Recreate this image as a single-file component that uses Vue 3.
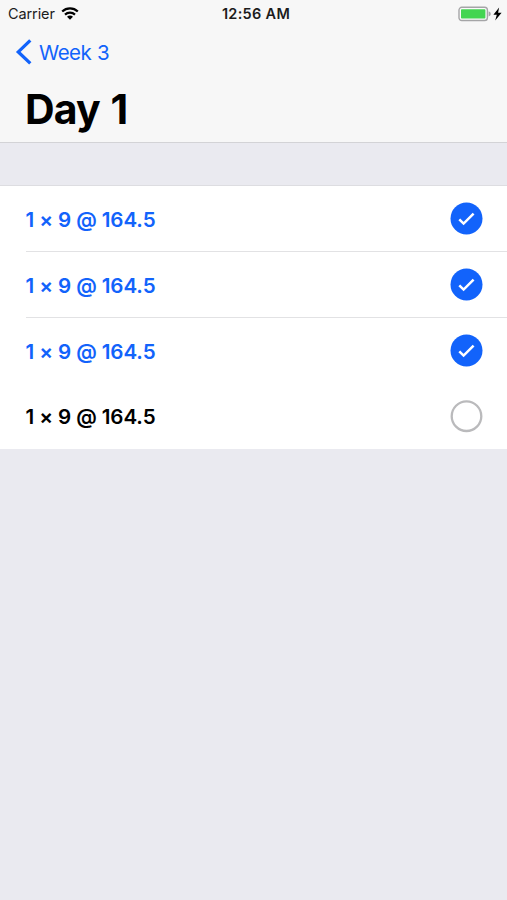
<script setup>
import { ref } from 'vue'

const sets = ref([
  { id: 1, label: '1 × 9 @ 164.5', done: true },
  { id: 2, label: '1 × 9 @ 164.5', done: true },
  { id: 3, label: '1 × 9 @ 164.5', done: true },
  { id: 4, label: '1 × 9 @ 164.5', done: false },
])
</script>

<template>
  <main class="screen">
    <header class="header">
      <div class="status">
        <div class="carrier">
          <span>Carrier</span>
          <svg class="wifi" width="18" height="13" viewBox="0 0 18 13">
            <path d="M1.2 4.5C5.6.4 12.4.4 16.8 4.5" fill="none" stroke="#000" stroke-width="2.3" />
            <path d="M4 7.6C6.8 5 11.2 5 14 7.6" fill="none" stroke="#000" stroke-width="2.2" />
            <path d="M9 12.7 6 9.7C7.7 8.1 10.3 8.1 12 9.7Z" />
          </svg>
        </div>
        <time class="clock">12:56 AM</time>
        <div class="power">
          <svg width="44" height="16" viewBox="0 0 44 16">
            <rect x="1" y="1.3" width="28.4" height="13.2" rx="2.8" fill="#fafafa" stroke="#a5a5a7" stroke-width="1.4" />
            <rect x="3" y="3.3" width="24.4" height="9.2" rx=".8" fill="#43d551" />
            <path d="M30.6 5.3Q32.8 6 32.8 7.9T30.6 10.5Z" fill="#a5a5a7" />
            <path d="M41.1 1.4 35.4 8.7H38.8L37.2 14.4 43.6 6.8H40.1Z" />
          </svg>
        </div>
      </div>
      <a class="back">
        <svg width="18" height="28" viewBox="0 0 18 28">
          <path d="M15.3 2.4 3.3 13.9 15.3 25.4" fill="none" stroke="#1263fb" stroke-width="3.3" />
        </svg>
        <span>Week 3</span>
      </a>
      <h1 class="title">Day 1</h1>
    </header>
    <ul class="sets">
      <li v-for="set in sets" :key="set.id" class="set" :class="{ done: set.done }">
        <span class="label">{{ set.label }}</span>
        <svg class="mark" width="34" height="34" viewBox="0 0 34 34">
          <template v-if="set.done">
            <circle cx="17.5" cy="16.5" r="16" fill="#1263fb" />
            <path d="M10.3 17.3 14.6 21.6 24.6 11.6" fill="none" stroke="#fff" stroke-width="2.5" />
          </template>
          <circle v-else cx="17.5" cy="17.2" r="14.8" fill="#fff" stroke="#bababc" stroke-width="2.3" />
        </svg>
      </li>
    </ul>
  </main>
</template>

<style>
body {
  margin: 0;
  background: #eaeaf0;
}
</style>

<style scoped>
.screen {
  min-height: 900px;
  background: #eaeaf0;
  font-family: Inter, "Liberation Sans", sans-serif;
  color: #000;
}
.header {
  box-sizing: border-box;
  height: 143px;
  background: #f7f7f7;
  border-bottom: 1px solid #d3d3d6;
}
.status {
  display: grid;
  grid-template-columns: 1fr auto 1fr;
  align-items: center;
  height: 27px;
  padding: 0 5px 0 8px;
  color: #1c1c1c;
}
.carrier {
  display: flex;
  align-items: center;
  gap: 6px;
  font-size: 14.5px;
  letter-spacing: -0.1px;
}
.clock {
  font-size: 14.5px;
  font-weight: 600;
  letter-spacing: 0.3px;
  margin-left: 2px;
}
.power {
  display: flex;
  justify-content: flex-end;
}
.back {
  display: flex;
  align-items: center;
  gap: 6px;
  width: max-content;
  height: 50px;
  padding-left: 15px;
  font-size: 20.5px;
  letter-spacing: -0.5px;
  word-spacing: 0.5px;
  color: #1263fb;
}
.title {
  margin: 0;
  padding: 1px 0 0 25px;
  font-size: 41px;
  line-height: 62px;
  font-weight: 700;
  letter-spacing: -0.9px;
  word-spacing: 2px;
}
.sets {
  list-style: none;
  margin: 42px 0 0;
  padding: 0;
  background: #fff;
  border-top: 1px solid #dddde1;
}
.set {
  display: flex;
  align-items: center;
  justify-content: space-between;
  box-sizing: border-box;
  height: 66px;
  margin-left: 26px;
  padding-right: 24px;
  border-bottom: 1px solid #e2e2e4;
}
.set:nth-last-child(-n + 2) {
  border-bottom-color: transparent;
}
.set:last-child {
  height: 65px;
}
.label {
  padding-top: 1px;
  margin-left: -0.5px;
  font-size: 20.6px;
  font-weight: 600;
  letter-spacing: -0.1px;
  font-feature-settings: "calt" 0;
}
.done .label {
  color: #1263fb;
}
.mark {
  display: block;
}
</style>
